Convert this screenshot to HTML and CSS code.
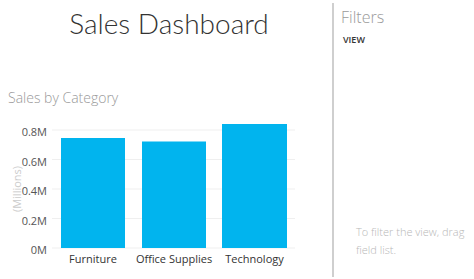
FILE: index.html
```html
<!DOCTYPE html>
<html>
<head>
<meta charset="utf-8">
<link rel="stylesheet" href="styles.css">
</head>
<body>
<div class="page">
  <main class="canvas">
    <h1 class="title">Sales Dashboard</h1>
    <h2 class="subtitle">Sales by Category</h2>
    <svg class="chart" width="300" height="160" viewBox="0 112 300 160">
      <g class="grid">
        <line x1="52" y1="130" x2="295" y2="130"/>
        <line x1="52" y1="159.5" x2="295" y2="159.5"/>
        <line x1="52" y1="189" x2="295" y2="189"/>
        <line x1="52" y1="218.5" x2="295" y2="218.5"/>
        <line x1="52" y1="248" x2="295" y2="248"/>
      </g>
      <g class="bars">
        <rect x="61" y="138" width="64" height="110"/>
        <rect x="142" y="141.5" width="64" height="106.5"/>
        <rect x="222" y="124" width="65" height="124"/>
      </g>
      <g class="ylabels">
        <text x="47" y="131.5">0.8M</text>
        <text x="47" y="161">0.6M</text>
        <text x="47" y="190.5">0.4M</text>
        <text x="47" y="220">0.2M</text>
        <text x="47" y="249.5">0M</text>
      </g>
      <g class="xlabels">
        <text x="93" y="258.5">Furniture</text>
        <text x="174" y="258.5">Office Supplies</text>
        <text x="254.5" y="258.5">Technology</text>
      </g>
      <text class="ytitle" x="16" y="189" transform="rotate(-90 16 189)">(Millions)</text>
    </svg>
  </main>
  <aside class="filters">
    <h3 class="filters-title">Filters</h3>
    <div class="filters-section">VIEW</div>
    <p class="filters-hint">To filter the view, drag field list.</p>
  </aside>
</div>
</body>
</html>
```
FILE: styles.css
```css
html, body {
  margin: 0;
  padding: 0;
  background: #ffffff;
}
body {
  width: 474px;
  height: 279px;
  overflow: hidden;
  font-family: "Open Sans", "Noto Sans", sans-serif;
}
.page {
  display: flex;
  height: 279px;
}
.canvas {
  width: 332px;
  flex: none;
  display: flex;
  flex-direction: column;
}
.title {
  margin: 0;
  padding-top: 9px;
  width: 338px;
  text-align: center;
  font-family: "Lato", "Open Sans", sans-serif;
  font-weight: 300;
  font-size: 28px;
  line-height: 28px;
  color: #333333;
}
.subtitle {
  margin: 0;
  padding: 0 0 0 8px;
  margin-top: 53px;
  font-weight: 300;
  font-size: 14px;
  line-height: 16px;
  color: #999999;
}
.chart {
  display: block;
  margin-top: 6px;
}
.grid line {
  stroke: #efefef;
  stroke-width: 1;
}
.bars rect {
  fill: #01b4ee;
}
.ylabels text {
  font-family: "Open Sans", "Noto Sans", sans-serif;
  font-size: 11px;
  fill: #555555;
  text-anchor: end;
  dominant-baseline: central;
}
.xlabels text {
  font-family: "Open Sans", "Noto Sans", sans-serif;
  font-size: 11px;
  fill: #333333;
  text-anchor: middle;
  dominant-baseline: central;
}
.ytitle {
  font-family: "Open Sans", "Noto Sans", sans-serif;
  font-size: 11px;
  fill: #cccccc;
  text-anchor: middle;
  dominant-baseline: central;
}
.filters {
  width: 142px;
  flex: none;
  margin-top: 3px;
  height: 274px;
  border-left: 2px solid #cfcfcf;
  padding-left: 7px;
  box-sizing: border-box;
  display: flex;
  flex-direction: column;
}
.filters-title {
  margin: 0;
  padding-top: 4px;
  font-weight: 300;
  font-size: 16px;
  line-height: 20px;
  color: #9a9a9a;
}
.filters-section {
  margin-top: 8px;
  padding-left: 2px;
  font-size: 9px;
  font-weight: 600;
  line-height: 10px;
  color: #333333;
}
.filters-hint {
  margin: 0;
  margin-top: auto;
  margin-bottom: 18px;
  padding-left: 15px;
  width: 116px;
  font-size: 11px;
  font-weight: 300;
  line-height: 18px;
  color: #b8b8b8;
}
```
